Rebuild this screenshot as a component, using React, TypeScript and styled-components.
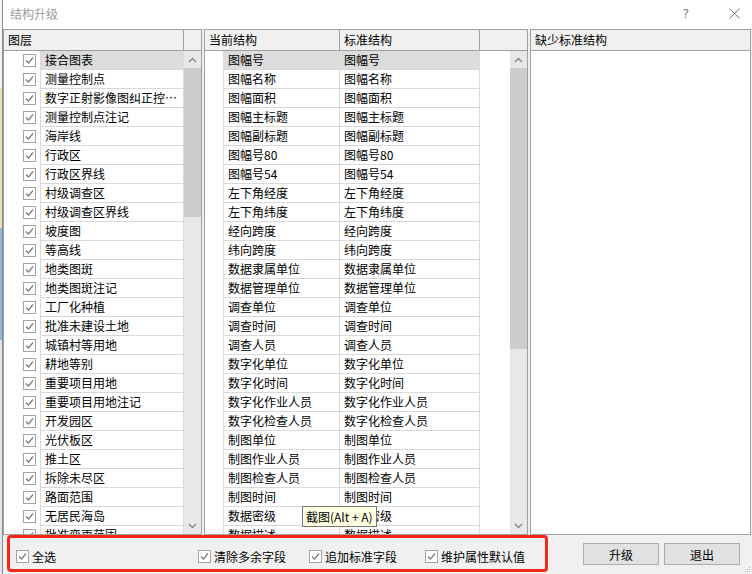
import styled, { createGlobalStyle } from 'styled-components'

const GlobalStyle = createGlobalStyle`
  html, body { margin: 0; padding: 0; }
  body {
    font-family: "Noto Sans CJK SC", "Noto Sans", sans-serif;
    font-size: 12px;
    color: #000;
  }
`

const layers = [
  '接合图表', '测量控制点', '数字正射影像图纠正控…', '测量控制点注记', '海岸线', '行政区',
  '行政区界线', '村级调查区', '村级调查区界线', '坡度图', '等高线', '地类图斑', '地类图斑注记',
  '工厂化种植', '批准未建设土地', '城镇村等用地', '耕地等别', '重要项目用地', '重要项目用地注记',
  '开发园区', '光伏板区', '推土区', '拆除未尽区', '路面范围', '无居民海岛', '批准变更范围',
]

const fields = [
  '图幅号', '图幅名称', '图幅面积', '图幅主标题', '图幅副标题', '图幅号80', '图幅号54',
  '左下角经度', '左下角纬度', '经向跨度', '纬向跨度', '数据隶属单位', '数据管理单位', '调查单位',
  '调查时间', '调查人员', '数字化单位', '数字化时间', '数字化作业人员', '数字化检查人员', '制图单位',
  '制图作业人员', '制图检查人员', '制图时间', '数据密级', '数据描述',
]

const Window = styled.div`
  position: relative;
  width: 752px;
  height: 574px;
  display: flex;
  overflow: hidden;
  background: #f0f0f0;
`
const Backdrop = styled.div`
  width: 2px;
  flex-shrink: 0;
  background: linear-gradient(to bottom, #f4f4f4 0, #f4f4f4 88px, #ebe3ae 88px, #ebe3ae 228px,
    #8fb7d8 228px, #8fb7d8 340px, #e4e4e4 340px);
`
const Dialog = styled.div`
  flex: 1;
  display: flex;
  flex-direction: column;
  border-left: 1px solid #8c8c8c;
`
const TitleBar = styled.div`
  height: 29px;
  flex-shrink: 0;
  display: flex;
  align-items: center;
  padding: 0 8px 2px 7px;
  box-sizing: border-box;
  background: #fff;
  gap: 28px;
`
const Title = styled.span`
  color: #9a9a9a;
  font-size: 12px;
  flex: 1;
`
const TitleButton = styled.span`
  width: 20px;
  display: flex;
  justify-content: center;
  color: #7a7a7a;
  font-family: "DejaVu Sans", sans-serif;
  font-size: 12px;
`
const Main = styled.div`
  height: 506px;
  display: flex;
  gap: 2px;
`
const Panel = styled.div<{ $w: number }>`
  width: ${p => p.$w}px;
  box-sizing: border-box;
  border: 1px solid #a0a0a0;
  display: flex;
  flex-direction: column;
  background: #fff;
`
const HeaderRow = styled.div`
  height: 21px;
  flex-shrink: 0;
  display: flex;
  box-sizing: border-box;
  border-bottom: 1px solid #a0a0a0;
  background: #f0f0f0;
`
const HeaderCell = styled.div<{ $w?: number }>`
  ${p => (p.$w ? `width: ${p.$w}px;` : 'flex: 1;')}
  box-sizing: border-box;
  padding-left: 4px;
  line-height: 20px;
  white-space: nowrap;
  border-right: ${p => (p.$w ? '1px solid #a0a0a0' : 'none')};
`
const Body = styled.div`
  flex: 1;
  display: flex;
  min-height: 0;
`
const List = styled.div`
  flex: 1;
  overflow: hidden;
`
const Row = styled.div`
  display: flex;
  height: 19px;
`
const CheckCell = styled.div`
  width: 37px;
  box-sizing: border-box;
  border-right: 1px solid #d9d9d9;
  padding-left: 19px;
  display: flex;
  align-items: center;
`
const Gutter = styled.div`
  width: 18px;
`
const Cell = styled.div<{ $w: number; $sel?: boolean; $left?: boolean }>`
  width: ${p => p.$w}px;
  box-sizing: border-box;
  padding-left: 4px;
  line-height: 18px;
  white-space: nowrap;
  overflow: hidden;
  border-bottom: 1px solid #d9d9d9;
  border-right: 1px solid #d9d9d9;
  border-left: ${p => (p.$left ? '1px solid #d9d9d9' : 'none')};
  background: ${p => (p.$sel ? '#dcdcdc' : '#fff')};
`
const ScrollBar = styled.div`
  width: 17px;
  flex-shrink: 0;
  display: flex;
  flex-direction: column;
  background: #e8e8e8;
`
const Arrow = styled.div`
  height: 17px;
  flex-shrink: 0;
  display: flex;
  align-items: center;
  justify-content: center;
`
const Thumb = styled.div<{ $h: number }>`
  height: ${p => p.$h}px;
  background: #cdcdcd;
  flex-shrink: 0;
`
const Track = styled.div`
  flex: 1;
`
const Footer = styled.div`
  flex: 1;
  display: flex;
  padding-left: 4px;
  padding-right: 12px;
`
const OptionGroup = styled.div`
  width: 541px;
  height: 37px;
  box-sizing: border-box;
  border: 3px solid #f2261b;
  border-radius: 4px;
  padding: 6px 0 0 6px;
  display: grid;
  grid-template-columns: 182px 111px 116px auto;
  align-items: center;
`
const Option = styled.label`
  display: flex;
  align-items: center;
  gap: 3px;
  white-space: nowrap;
`
const Buttons = styled.div`
  margin-left: auto;
  margin-top: 8px;
  display: flex;
  gap: 5px;
  align-items: flex-start;
`
const Button = styled.button`
  width: 76px;
  height: 22px;
  box-sizing: border-box;
  border: 1px solid #adadad;
  background: #e1e1e1;
  font: inherit;
  font-size: 12px;
  color: #000;
  padding: 0;
`
const Tooltip = styled.div`
  position: absolute;
  left: 302px;
  top: 506px;
  height: 21px;
  box-sizing: border-box;
  padding: 0 3px;
  line-height: 19px;
  background: #ffffe1;
  border: 1px solid #767676;
  white-space: nowrap;
`
const Grip = styled.svg`
  position: absolute;
  right: 1px;
  bottom: 1px;
`

function CheckBox () {
  return (
    <svg width="13" height="13" viewBox="0 0 13 13">
      <rect x="0.5" y="0.5" width="12" height="12" fill="#fff" stroke="#a3a3a3" />
      <polyline points="3,6.5 5.5,9 10,3.5" fill="none" stroke="#7a7a7a" strokeWidth="1.2" />
    </svg>
  )
}

function Chevron ({ up }: { up?: boolean }) {
  return (
    <svg width="9" height="6" viewBox="0 0 9 6">
      <polyline points={up ? '1,5 4.5,1.5 8,5' : '1,1 4.5,4.5 8,1'} fill="none" stroke="#8a8a8a" strokeWidth="1.5" />
    </svg>
  )
}

function Scroll ({ thumb }: { thumb: number }) {
  return (
    <ScrollBar>
      <Arrow><Chevron up /></Arrow>
      <Thumb $h={thumb} />
      <Track />
      <Arrow><Chevron /></Arrow>
    </ScrollBar>
  )
}

function App () {
  return (
    <Window>
      <GlobalStyle />
      <Backdrop />
      <Dialog>
        <TitleBar>
          <Title>结构升级</Title>
          <TitleButton>?</TitleButton>
          <TitleButton>
            <svg width="11" height="11" viewBox="0 0 11 11">
              <path d="M0.5 0.5 L10.5 10.5 M10.5 0.5 L0.5 10.5" stroke="#7a7a7a" strokeWidth="1" />
            </svg>
          </TitleButton>
        </TitleBar>

        <Main>
          <Panel $w={199}>
            <HeaderRow>
              <HeaderCell $w={180}>图层</HeaderCell>
              <HeaderCell />
            </HeaderRow>
            <Body>
              <List>
                {layers.map((name, i) => (
                  <Row key={name}>
                    <CheckCell><CheckBox /></CheckCell>
                    <Cell $w={143} $sel={i === 0}>{name}</Cell>
                  </Row>
                ))}
              </List>
              <Scroll thumb={149} />
            </Body>
          </Panel>

          <Panel $w={324}>
            <HeaderRow>
              <HeaderCell $w={135}>当前结构</HeaderCell>
              <HeaderCell $w={140}>标准结构</HeaderCell>
              <HeaderCell />
            </HeaderRow>
            <Body>
              <List>
                {fields.map((name, i) => (
                  <Row key={name}>
                    <Gutter />
                    <Cell $w={117} $left $sel={i === 0}>{name}</Cell>
                    <Cell $w={140} $sel={i === 0}>{name}</Cell>
                  </Row>
                ))}
              </List>
              <Scroll thumb={281} />
            </Body>
          </Panel>

          <Panel $w={221}>
            <HeaderRow>
              <HeaderCell>缺少标准结构</HeaderCell>
            </HeaderRow>
          </Panel>
        </Main>

        <Footer>
          <OptionGroup>
            <Option><CheckBox />全选</Option>
            <Option><CheckBox />清除多余字段</Option>
            <Option><CheckBox />追加标准字段</Option>
            <Option><CheckBox />维护属性默认值</Option>
          </OptionGroup>
          <Buttons>
            <Button>升级</Button>
            <Button>退出</Button>
          </Buttons>
        </Footer>
      </Dialog>

      <Tooltip>截图(Alt + A)</Tooltip>
      <Grip width="7" height="7" viewBox="0 0 7 7">
        <rect x="5" y="1" width="1" height="1" fill="#b0b0b0" />
        <rect x="3" y="3" width="1" height="1" fill="#b0b0b0" />
        <rect x="5" y="3" width="1" height="1" fill="#b0b0b0" />
        <rect x="1" y="5" width="1" height="1" fill="#b0b0b0" />
        <rect x="3" y="5" width="1" height="1" fill="#b0b0b0" />
        <rect x="5" y="5" width="1" height="1" fill="#b0b0b0" />
      </Grip>
    </Window>
  )
}

export default App
